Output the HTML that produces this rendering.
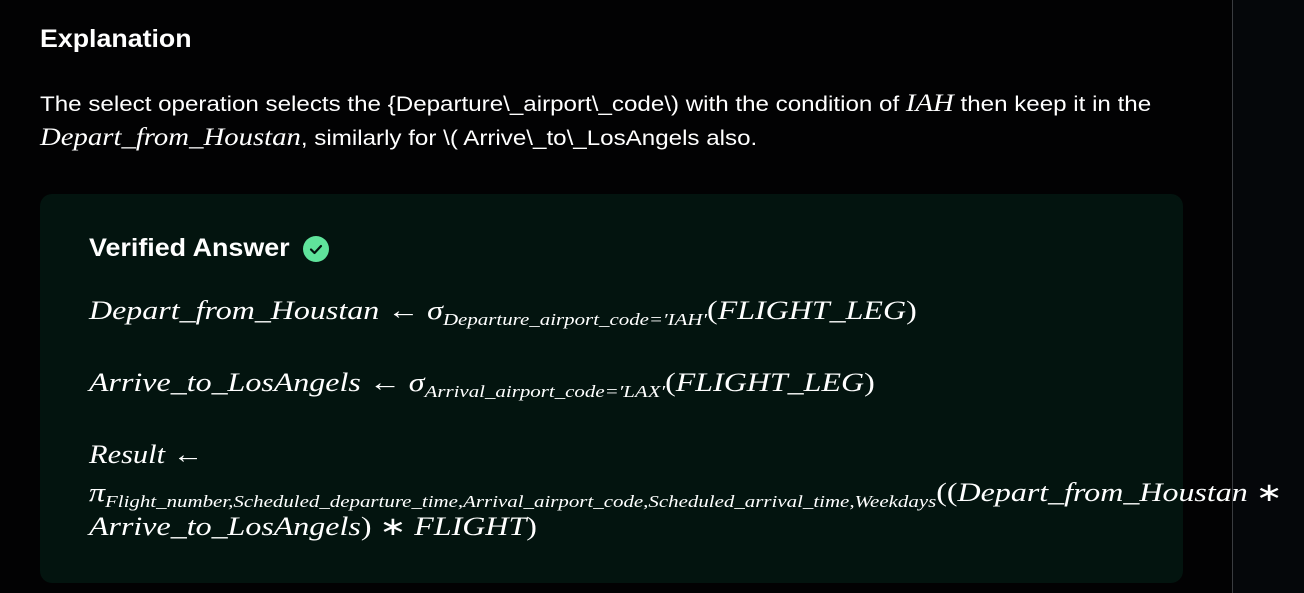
<!DOCTYPE html>
<html><head><meta charset="utf-8"><style>
html,body{margin:0;padding:0;width:1304px;height:593px;overflow:hidden;background:#020203;color:#fff;font-family:"Liberation Sans",sans-serif;}
.right{position:absolute;left:1232px;top:0;width:72px;height:593px;background:#05070a;border-left:1px solid #3a3c40;}
.a{position:absolute;white-space:nowrap;transform-origin:0 50%;}
.m{font-family:"Liberation Serif",serif;font-style:italic;font-size:26px;transform:scaleX(1.23);}
.s{font-size:17px;position:relative;top:6px;}
.n{font-style:normal;}
.p{font-size:21px;transform:scaleX(1.15);}
.box{position:absolute;left:40px;top:194px;width:1143px;height:389px;background:#03140f;border-radius:12px;}
</style></head><body>
<div class="right"></div>
<div class="a" style="left:40px;top:25px;font-size:25px;font-weight:bold;transform:scaleX(1.07)">Explanation</div>
<div class="a p" style="left:40px;top:90px;">The select operation selects the {Departure\_airport\_code\) with the condition of <span style="font-family:'Liberation Serif',serif;font-style:italic;font-size:25px">IAH</span> then keep it in the</div>
<div class="a p" style="left:40px;top:124px;"><span style="font-family:'Liberation Serif',serif;font-style:italic;font-size:25px">Depart_from_Houstan</span>, similarly for \( Arrive\_to\_LosAngels also.</div>
<div class="box"></div>
<div class="a" style="left:89px;top:234px;font-size:25px;font-weight:bold;transform:scaleX(1.075)">Verified Answer</div>
<svg class="a" style="left:302px;top:235px" width="28" height="28" viewBox="0 0 28 28"><circle cx="14" cy="14" r="13" fill="#5fe39b"/><path d="M9 14.5l3.5 3.5 6.5-7" fill="none" stroke="#03140f" stroke-width="2.2" stroke-linecap="round" stroke-linejoin="round"/></svg>
<div class="a m" style="left:89px;top:296px;">Depart_from_Houstan <span class="n">←</span> σ<span class="s">Departure_airport_code=′IAH′</span><span class="n">(</span>FLIGHT_LEG<span class="n">)</span></div>
<div class="a m" style="left:89px;top:368px;">Arrive_to_LosAngels <span class="n">←</span> σ<span class="s">Arrival_airport_code=′LAX′</span><span class="n">(</span>FLIGHT_LEG<span class="n">)</span></div>
<div class="a m" style="left:89px;top:440px;transform:scaleX(1.17)">Result <span class="n">←</span></div>
<div class="a m" style="left:89px;top:478px;">π<span class="s">Flight_number,Scheduled_departure_time,Arrival_airport_code,Scheduled_arrival_time,Weekdays</span><span class="n">((</span>Depart_from_Houstan <span class="n">∗</span></div>
<div class="a m" style="left:89px;top:512px;">Arrive_to_LosAngels<span class="n">)</span> <span class="n">∗</span> FLIGHT<span class="n">)</span></div>
</body></html>
